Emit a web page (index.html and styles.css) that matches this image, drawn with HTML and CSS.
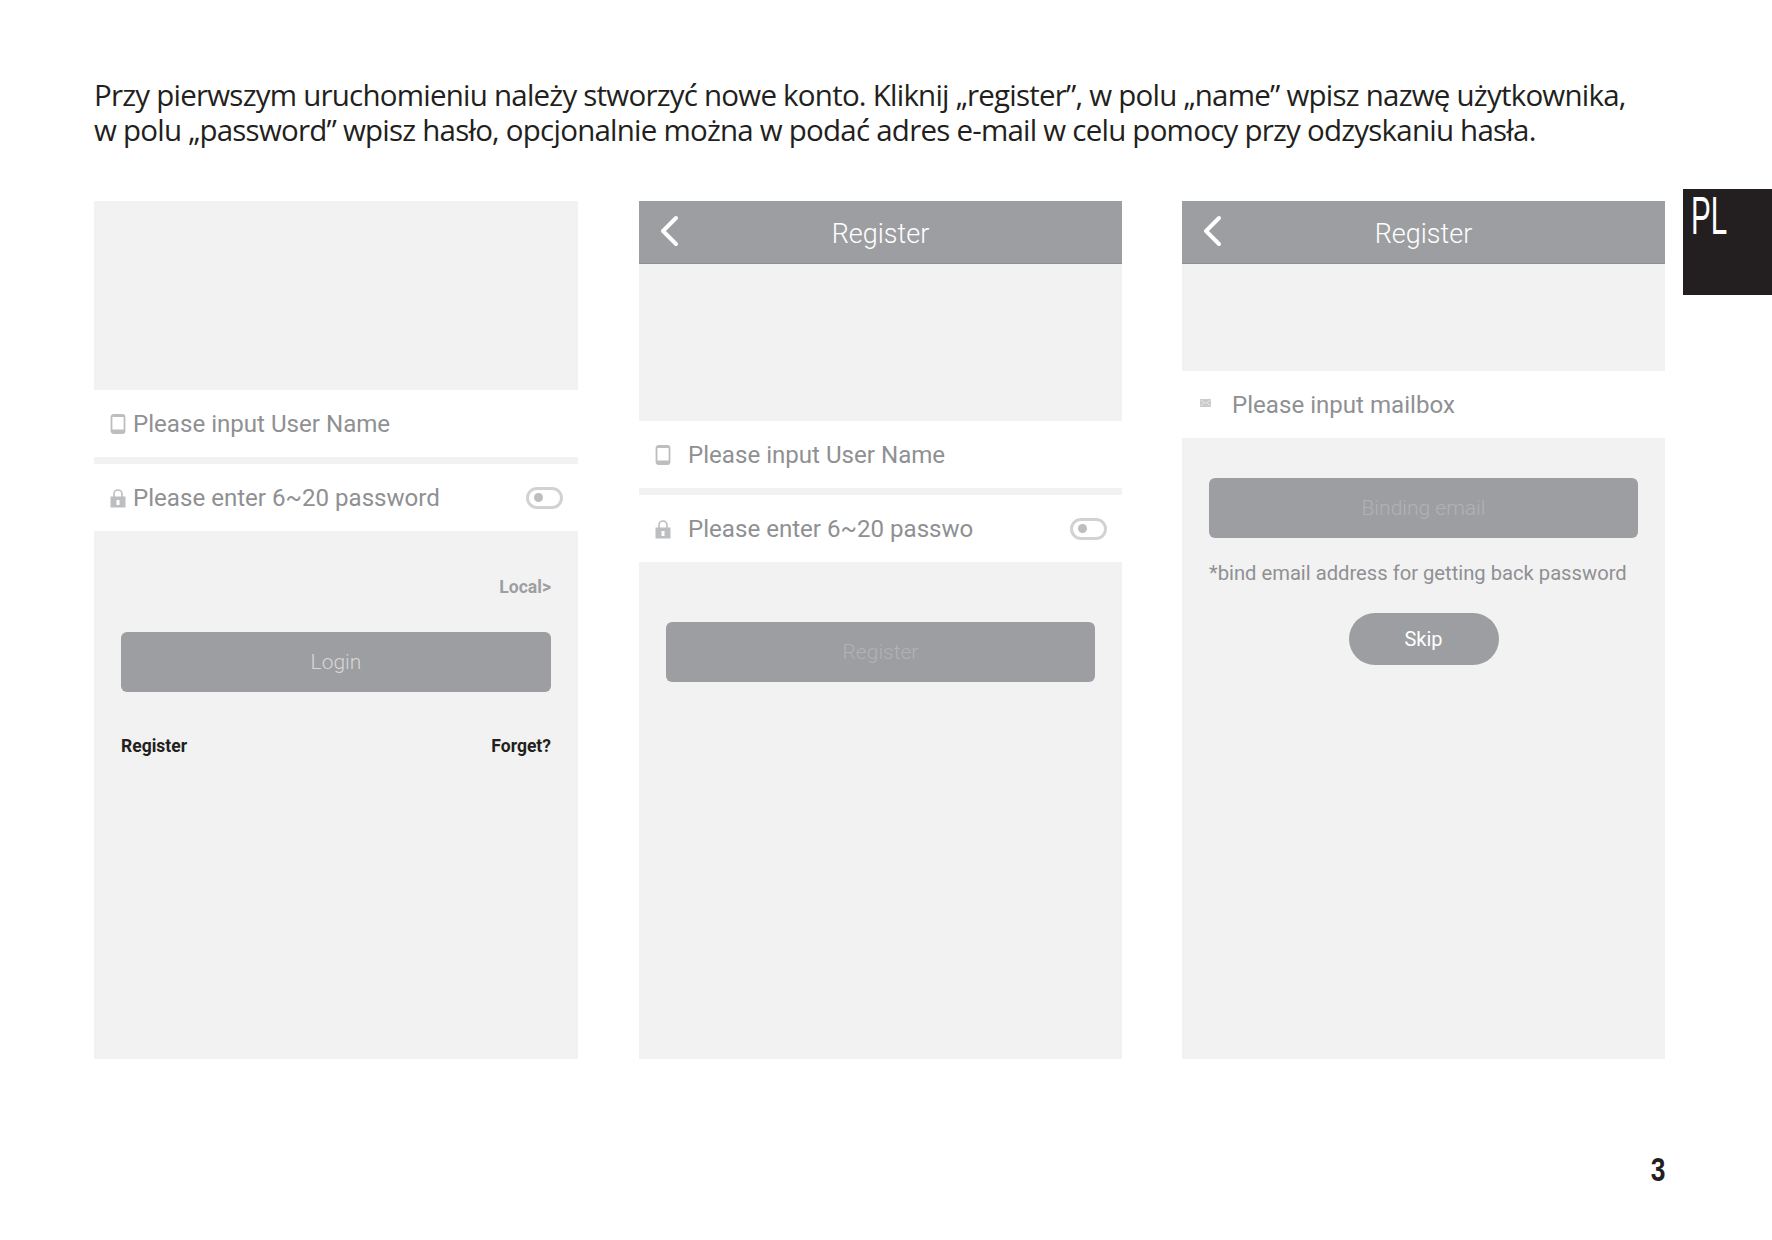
FILE: index.html
```html
<!DOCTYPE html>
<html lang="pl">
<head>
<meta charset="utf-8">
<title>Instrukcja PL</title>
<link rel="stylesheet" href="styles.css">
</head>
<body>
<main class="page">
  <p class="intro">Przy pierwszym uruchomieniu należy stworzyć nowe konto. Kliknij „register”, w polu „name” wpisz nazwę użytkownika,<br>w polu „password” wpisz hasło, opcjonalnie można w podać adres e-mail w celu pomocy przy odzyskaniu hasła.</p>

  <div class="tab"><span class="tab-label">PL</span></div>

  <section class="screens">
    <article class="screen screen-wide">
      <div class="spacer spacer-login"></div>
      <div class="row row-tall">
        <svg class="icon icon-a" viewBox="0 0 15 20"><rect x="1" y="1" width="13" height="18" rx="2" fill="none" stroke="#bdbec0" stroke-width="1.8"/><rect x="1" y="15.5" width="13" height="3.5" rx="1.2" fill="#bdbec0"/><rect x="1" y="1" width="13" height="2" fill="#bdbec0"/></svg>
        <span class="row-text">Please input User Name</span>
      </div>
      <div class="row row-next">
        <svg class="icon icon-a" viewBox="0 0 16 20"><path d="M4 9V6a4 4 0 0 1 8 0v3" fill="none" stroke="#bdbec0" stroke-width="1.6"/><rect x="0.5" y="8.5" width="15" height="11" fill="#bdbec0"/><rect x="6.5" y="12" width="3" height="5" fill="#fff"/></svg>
        <span class="row-text">Please enter 6~20 password</span>
        <span class="toggle"><span class="toggle-dot"></span></span>
      </div>
      <div class="content">
        <div class="local">Local&gt;</div>
        <div class="btn btn-login">Login</div>
        <div class="links"><span>Register</span><span>Forget?</span></div>
      </div>
    </article>

    <article class="screen">
      <header class="bar">
        <svg class="back" viewBox="0 0 20 32"><path d="M17 3 4 16l13 13" fill="none" stroke="#fff" stroke-width="4" stroke-linecap="round" stroke-linejoin="round"/></svg>
        <span class="bar-title">Register</span>
      </header>
      <div class="spacer spacer-reg"></div>
      <div class="row row-tall">
        <svg class="icon icon-b" viewBox="0 0 15 20"><rect x="1" y="1" width="13" height="18" rx="2" fill="none" stroke="#bdbec0" stroke-width="1.8"/><rect x="1" y="15.5" width="13" height="3.5" rx="1.2" fill="#bdbec0"/><rect x="1" y="1" width="13" height="2" fill="#bdbec0"/></svg>
        <span class="row-text">Please input User Name</span>
      </div>
      <div class="row row-next">
        <svg class="icon icon-b" viewBox="0 0 16 20"><path d="M4 9V6a4 4 0 0 1 8 0v3" fill="none" stroke="#bdbec0" stroke-width="1.6"/><rect x="0.5" y="8.5" width="15" height="11" fill="#bdbec0"/><rect x="6.5" y="12" width="3" height="5" fill="#fff"/></svg>
        <span class="row-text">Please enter 6~20 passwo</span>
        <span class="toggle"><span class="toggle-dot"></span></span>
      </div>
      <div class="content">
        <div class="btn btn-register">Register</div>
      </div>
    </article>

    <article class="screen">
      <header class="bar">
        <svg class="back" viewBox="0 0 20 32"><path d="M17 3 4 16l13 13" fill="none" stroke="#fff" stroke-width="4" stroke-linecap="round" stroke-linejoin="round"/></svg>
        <span class="bar-title">Register</span>
      </header>
      <div class="spacer spacer-mail"></div>
      <div class="row row-mail">
        <svg class="icon icon-c" viewBox="0 0 11 8"><rect width="11" height="8" fill="#c9cacc"/><path d="M0.5 1 5.5 4.5 10.5 1M0.5 7 4 3.5M10.5 7 7 3.5" fill="none" stroke="#eeeeef" stroke-width="0.8"/></svg>
        <span class="row-text">Please input mailbox</span>
      </div>
      <div class="content content-mail">
        <div class="btn btn-bind">Binding email</div>
        <p class="note">*bind email address for getting back password</p>
        <div class="skip">Skip</div>
      </div>
    </article>
  </section>

  <footer class="foot"><span class="page-no">3</span></footer>
</main>
</body>
</html>
```

FILE: styles.css
```css
* { box-sizing: border-box; }

html, body {
  margin: 0;
  padding: 0;
  background: #fff;
}

.page {
  position: relative;
  width: 1772px;
  height: 1240px;
  padding: 77px 0 0 94px;
  overflow: hidden;
}

.intro {
  margin: 0;
  height: 124px;
  font-family: "Open Sans", "Noto Sans", sans-serif;
  font-size: 29.5px;
  line-height: 35px;
  letter-spacing: -0.77px;
  color: #231f20;
  white-space: nowrap;
}

.tab {
  position: absolute;
  top: 189px;
  right: 0;
  width: 89px;
  height: 106px;
  background: #231f20;
}

.tab-label {
  position: absolute;
  left: 8px;
  top: -2px;
  font-family: "Liberation Sans", sans-serif;
  font-size: 54px;
  line-height: 56px;
  color: #fff;
  transform: scaleX(0.55);
  transform-origin: left top;
}

.screens {
  display: flex;
  gap: 60px;
  height: 858px;
}

.screen {
  display: flex;
  flex-direction: column;
  width: 483px;
  background: #f2f2f2;
  font-family: Roboto, sans-serif;
}

.screen-wide {
  width: 484px;
  margin-right: 1px;
}

.spacer-login { height: 189px; }
.spacer-reg { height: 157px; }
.spacer-mail { height: 107px; }

.bar {
  position: relative;
  display: flex;
  align-items: center;
  justify-content: center;
  height: 63px;
  padding-top: 4px;
  background: #9d9ea1;
  border-bottom: 1px solid #8e8f92;
}

.bar-title {
  font-size: 27px;
  font-weight: 300;
  color: #fff;
}

.back {
  position: absolute;
  left: 20px;
  top: 14px;
  width: 20px;
  height: 32px;
}

.row {
  display: flex;
  align-items: center;
  background: #fff;
  padding-right: 15px;
}

.row-tall { height: 67px; }
.row-next { height: 67px; margin-top: 7px; }
.row-mail { height: 67px; }

.icon { flex: none; }

.icon-a {
  width: 16px;
  height: 20px;
  margin: 0 7px 0 16px;
}

.icon-b {
  width: 16px;
  height: 20px;
  margin: 0 17px 0 16px;
}

.icon-c {
  width: 11px;
  height: 8px;
  margin: 0 21px 4px 18px;
}

.row-text {
  font-size: 24.1px;
  padding-top: 1px;
  color: #8f9093;
}

.toggle {
  display: flex;
  align-items: center;
  width: 37px;
  height: 22px;
  margin-left: auto;
  padding-left: 5px;
  border: 3px solid #d2d2d3;
  border-radius: 11px;
}

.toggle-dot {
  width: 9px;
  height: 9px;
  border-radius: 50%;
  background: #bdbec0;
}

.content {
  display: flex;
  flex-direction: column;
  padding: 0 27px;
}

.content-mail { padding-top: 40px; }

.local {
  margin-top: 45px;
  font-size: 17.6px;
  line-height: 22px;
  font-weight: 700;
  text-align: right;
  color: #9d9ea1;
}

.btn {
  display: flex;
  align-items: center;
  justify-content: center;
  height: 60px;
  border-radius: 6px;
  background: #9d9ea1;
  font-size: 21px;
  font-weight: 300;
}

.btn-login {
  margin-top: 34px;
  color: #d6d7d8;
}

.btn-register {
  margin-top: 60px;
  color: #b1b2b4;
}

.btn-bind {
  color: #b1b2b4;
}

.links {
  display: flex;
  justify-content: space-between;
  margin-top: 43px;
  font-size: 17.5px;
  line-height: 22px;
  font-weight: 700;
  color: #231f20;
}

.note {
  margin: 23px 0 0;
  font-size: 20.2px;
  line-height: 25px;
  color: #8f9093;
  white-space: nowrap;
}

.skip {
  display: flex;
  align-items: center;
  justify-content: center;
  align-self: center;
  width: 150px;
  height: 52px;
  margin-top: 27px;
  border-radius: 26px;
  background: #9d9ea1;
  font-size: 20px;
  color: #fff;
}

.foot {
  display: flex;
  justify-content: flex-end;
  width: 1571px;
  margin-top: 91px;
}

.page-no {
  font-family: "Liberation Sans", sans-serif;
  font-size: 33px;
  line-height: 40px;
  font-weight: 700;
  color: #231f20;
  transform: scaleX(0.8);
  transform-origin: right center;
}
```
